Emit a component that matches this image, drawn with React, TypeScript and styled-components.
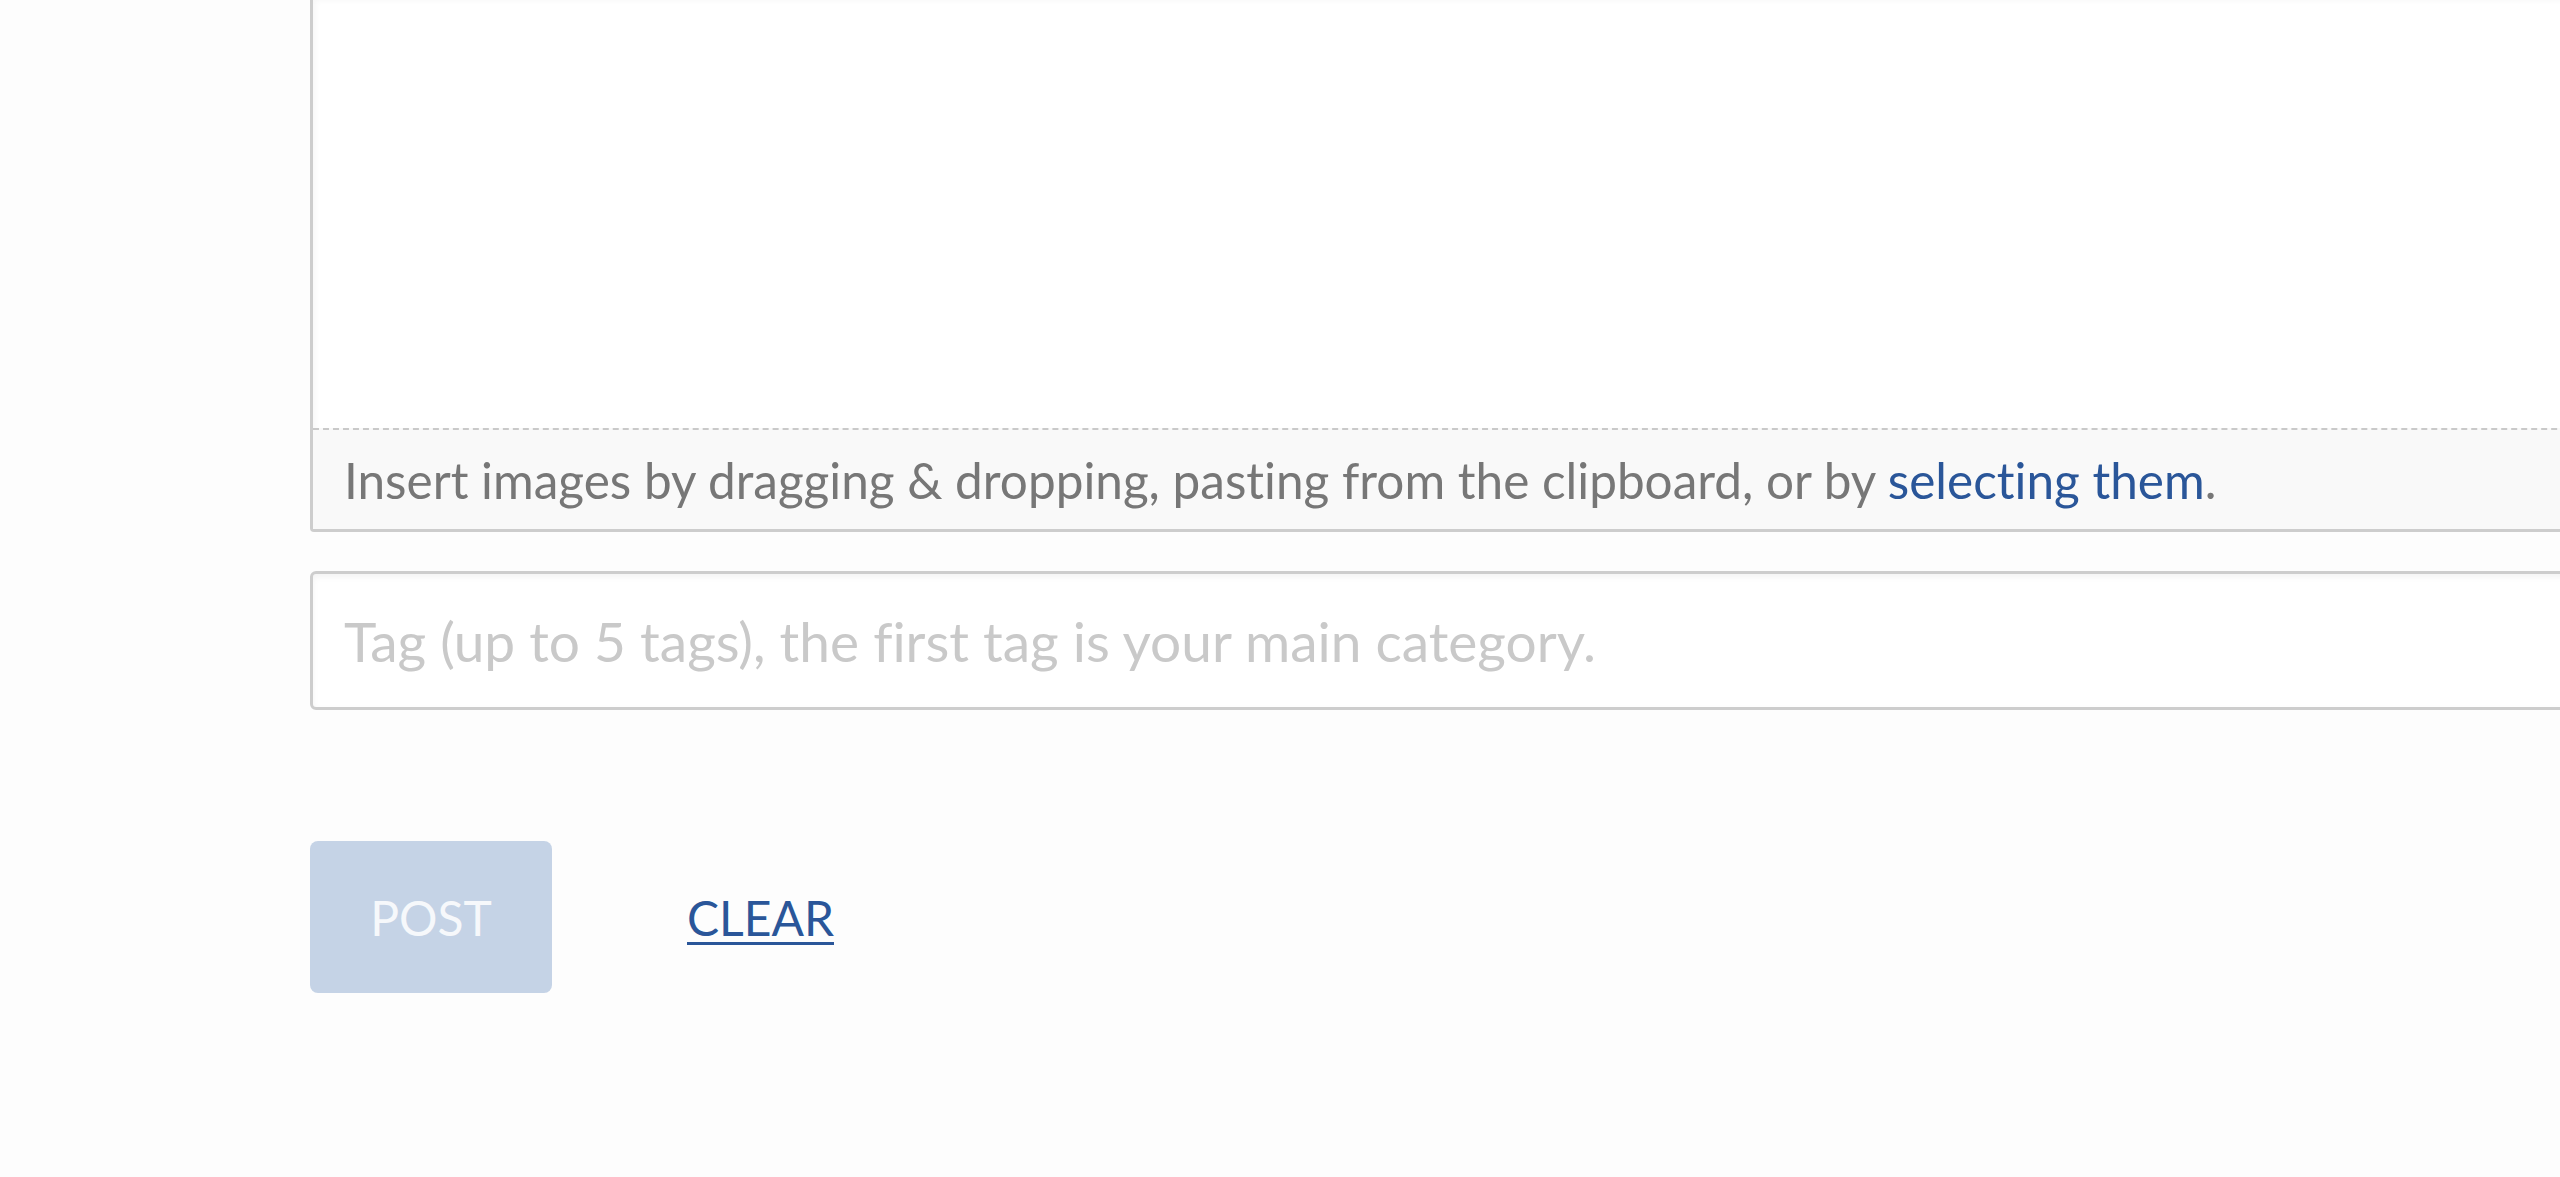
import React from 'react';
import styled, { createGlobalStyle } from 'styled-components';

const GlobalStyle = createGlobalStyle`
  html, body {
    margin: 0;
    padding: 0;
    background: #fdfdfd;
    overflow: hidden;
  }

  body {
    font-family: Lato, "Open Sans", sans-serif;
    font-variant-ligatures: none;
  }
`;

const Page = styled.main`
  padding-left: 310px;
  width: 2460px;
`;

const Editor = styled.div`
  display: flex;
  flex-direction: column;
  border: 3px solid #cdcdcd;
  border-top: none;
  border-radius: 0 0 4px 4px;
  background: #fff;
  box-shadow: inset 2px 0 6px rgba(0, 0, 0, 0.04);
`;

const Writing = styled.textarea`
  display: block;
  height: 428px;
  border: none;
  resize: none;
  background: transparent;
  outline: none;
  padding: 0;
`;

const DropHint = styled.div`
  border-top: 2px dashed #c9c9c9;
  background: #f9f9f9;
  height: 101px;
  padding-left: 31px;
  box-sizing: border-box;
  display: flex;
  align-items: center;
  font-size: 49.5px;
  color: #777;
`;

const Link = styled.a`
  color: #2a5699;
  text-decoration: none;
  cursor: pointer;
`;

const TagInput = styled.input`
  display: block;
  box-sizing: border-box;
  width: 100%;
  height: 139px;
  margin-top: 39px;
  border: 3px solid #cdcdcd;
  border-radius: 6px;
  padding: 0 0 0 31px;
  background: #fff;
  box-shadow: inset 0 3px 6px rgba(0, 0, 0, 0.05);
  font-family: Lato, "Open Sans", sans-serif;
  font-variant-ligatures: none;
  font-size: 55px;
  outline: none;

  &::placeholder {
    color: #c9c9c9;
  }
`;

const Actions = styled.div`
  display: flex;
  align-items: center;
  gap: 135px;
  margin-top: 131px;
`;

const PostButton = styled.button`
  width: 242px;
  height: 152px;
  border: none;
  border-radius: 8px;
  background: #c5d3e6;
  color: #f6f8fb;
  font-family: Lato, "Open Sans", sans-serif;
  font-size: 48px;
  text-transform: uppercase;
  cursor: default;
`;

const ClearLink = styled(Link)`
  font-size: 48px;
  text-decoration: underline;
  text-decoration-thickness: 3px;
  text-underline-offset: 6px;
  text-transform: uppercase;
`;

export default function App() {
  return (
    <>
      <GlobalStyle />
      <Page>
        <Editor>
          <Writing aria-label="Post body" />
          <DropHint>
            <span>
              Insert images by dragging &amp; dropping, pasting from the clipboard, or by{' '}
              <Link>selecting them</Link>.
            </span>
          </DropHint>
        </Editor>
        <TagInput placeholder="Tag (up to 5 tags), the first tag is your main category." />
        <Actions>
          <PostButton disabled>Post</PostButton>
          <ClearLink>Clear</ClearLink>
        </Actions>
      </Page>
    </>
  );
}
